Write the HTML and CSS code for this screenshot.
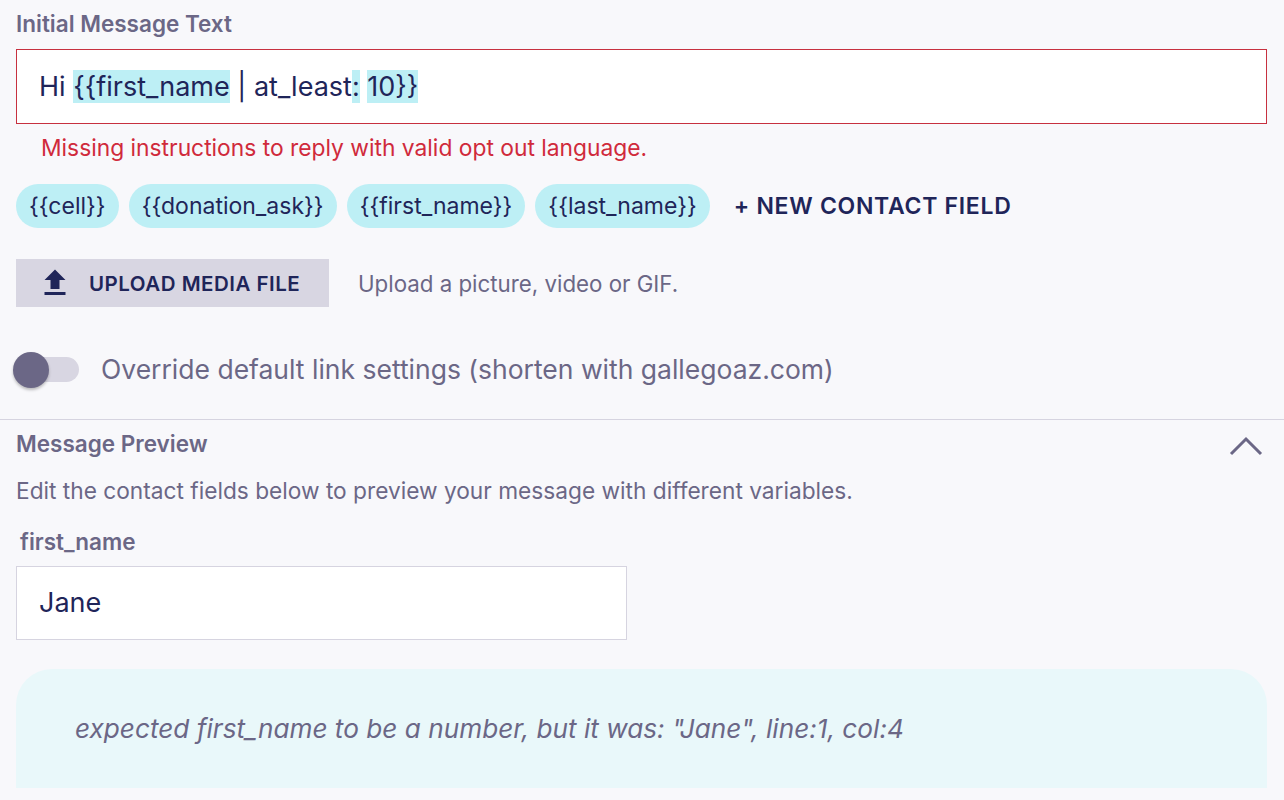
FILE: index.html
```html
<!DOCTYPE html>
<html lang="en">
<head>
<meta charset="utf-8">
<title>Initial Message</title>
<link rel="stylesheet" href="styles.css">
</head>
<body>
<div class="page">
  <section class="composer">
    <div class="field-label">Initial Message Text</div>
    <div class="msg-input is-error"><span class="msg-text">Hi <span class="hl">{{first_name</span> | at_least<span class="hl">:</span> <span class="hl">10}}</span></span></div>
    <div class="error-text">Missing instructions to reply with valid opt out language.</div>
    <div class="chips">
      <span class="chip">{{cell}}</span>
      <span class="chip">{{donation_ask}}</span>
      <span class="chip">{{first_name}}</span>
      <span class="chip">{{last_name}}</span>
      <span class="new-field">+ NEW CONTACT FIELD</span>
    </div>
    <div class="upload-row">
      <button class="upload-btn" type="button">
        <svg class="upload-icon" viewBox="0 0 24 24" width="36" height="36"><path d="M9 16h6v-6h4l-7-7-7 7h4zm-4 2h14v2H5z" fill="currentColor"/></svg>
        <span>UPLOAD MEDIA FILE</span>
      </button>
      <span class="helper">Upload a picture, video or GIF.</span>
    </div>
    <div class="toggle-row">
      <span class="toggle"><span class="track"></span><span class="knob"></span></span>
      <span class="toggle-label">Override default link settings (shorten with gallegoaz.com)</span>
    </div>
  </section>
  <hr class="divider">
  <section class="preview">
    <div class="preview-head">
      <div class="field-label">Message Preview</div>
      <svg class="chevron" viewBox="0 0 34 20" width="34" height="20"><polyline points="2,18 17,3 32,18" fill="none" stroke="currentColor" stroke-width="3"/></svg>
    </div>
    <div class="preview-desc">Edit the contact fields below to preview your message with different variables.</div>
    <div class="field-label small-indent">first_name</div>
    <div class="text-input">Jane</div>
    <div class="preview-box">
      <span class="preview-msg">expected first_name to be a number, but it was: "Jane", line:1, col:4</span>
    </div>
  </section>
</div>
</body>
</html>
```

FILE: styles.css
```css
* { box-sizing: border-box; }
html, body { margin: 0; padding: 0; }
body {
  background: #f8f8fb;
  font-family: "Inter", "Open Sans", sans-serif;
  color: #6b6786;
  width: 1284px;
  height: 800px;
  overflow: hidden;
}
.composer, .preview { padding: 0 17px 0 16px; }
.field-label {
  font-size: 22.5px;
  font-weight: 600;
  line-height: 32px;
  color: #6b6786;
}
.composer > .field-label { margin-top: 8px; }
.msg-input {
  margin-top: 9px;
  height: 75px;
  background: #fff;
  border: 1px solid #c7303f;
  display: flex;
  align-items: center;
  padding-left: 22px;
  padding-bottom: 1px;
  font-size: 27px;
  color: #1f2559;
}
.hl { background: #bdeff5; }
.error-text {
  margin-top: 8px;
  padding-left: 25px;
  font-size: 22.8px;
  line-height: 32px;
  color: #d02a3b;
}
.chips {
  margin-top: 20px;
  display: flex;
  align-items: center;
  gap: 10px;
  height: 44px;
}
.chip {
  height: 44px;
  padding: 0 13px;
  border-radius: 22px;
  background: #bdeff5;
  color: #1f2559;
  font-size: 23px;
  display: flex;
  align-items: center;
}
.new-field {
  margin-left: 14px;
  font-size: 23px;
  font-weight: 600;
  letter-spacing: 0.7px;
  color: #1f2559;
}
.upload-row {
  margin-top: 31px;
  display: flex;
  align-items: center;
  gap: 29px;
}
.upload-btn {
  height: 48px;
  width: 313px;
  border: none;
  background: #d8d6e2;
  display: flex;
  align-items: center;
  padding: 0 0 0 21px;
  gap: 16px;
  font-family: inherit;
  font-size: 20.5px;
  font-weight: 600;
  letter-spacing: 0.5px;
  white-space: nowrap;
  color: #1f2559;
}
.upload-icon { flex: none; }
.helper { font-size: 22.3px; color: #6b6786; }
.toggle-row {
  margin-top: 42px;
  height: 40px;
  display: flex;
  align-items: center;
}
.toggle {
  position: relative;
  width: 85px;
  height: 40px;
  flex: none;
}
.track {
  position: absolute;
  left: 6px;
  top: 8px;
  width: 57px;
  height: 25px;
  border-radius: 13px;
  background: #d8d6e2;
}
.knob {
  position: absolute;
  left: -3px;
  top: 3px;
  width: 36px;
  height: 36px;
  border-radius: 50%;
  background: #6b6786;
  box-shadow: 0 2px 3px rgba(0,0,0,0.25);
}
.toggle-label { font-size: 26.5px; color: #6b6786; }
.divider {
  margin: 30px 0 0;
  border: none;
  border-top: 1px solid #d6d4e0;
  height: 0;
}
.preview-head {
  margin-top: 8px;
  display: flex;
  align-items: center;
  justify-content: space-between;
}
.chevron { color: #6b6786; margin-right: 4px; margin-top: 4px; }
.preview-desc {
  margin-top: 15px;
  font-size: 22.7px;
  line-height: 32px;
  color: #6b6786;
}
.small-indent { margin-top: 19px; padding-left: 4px; }
.text-input {
  margin-top: 8px;
  width: 611px;
  height: 74px;
  background: #fff;
  border: 1px solid #d6d4e0;
  display: flex;
  align-items: center;
  padding-left: 22px;
  padding-bottom: 2px;
  font-size: 27px;
  color: #1f2559;
}
.preview-box {
  margin-top: 29px;
  height: 119px;
  background: #e9f8fa;
  border-radius: 36px 36px 0 0;
  display: flex;
  align-items: center;
  padding-left: 59px;
}
.preview-msg {
  font-size: 26.2px;
  font-style: italic;
  color: #6b6786;
}
```
